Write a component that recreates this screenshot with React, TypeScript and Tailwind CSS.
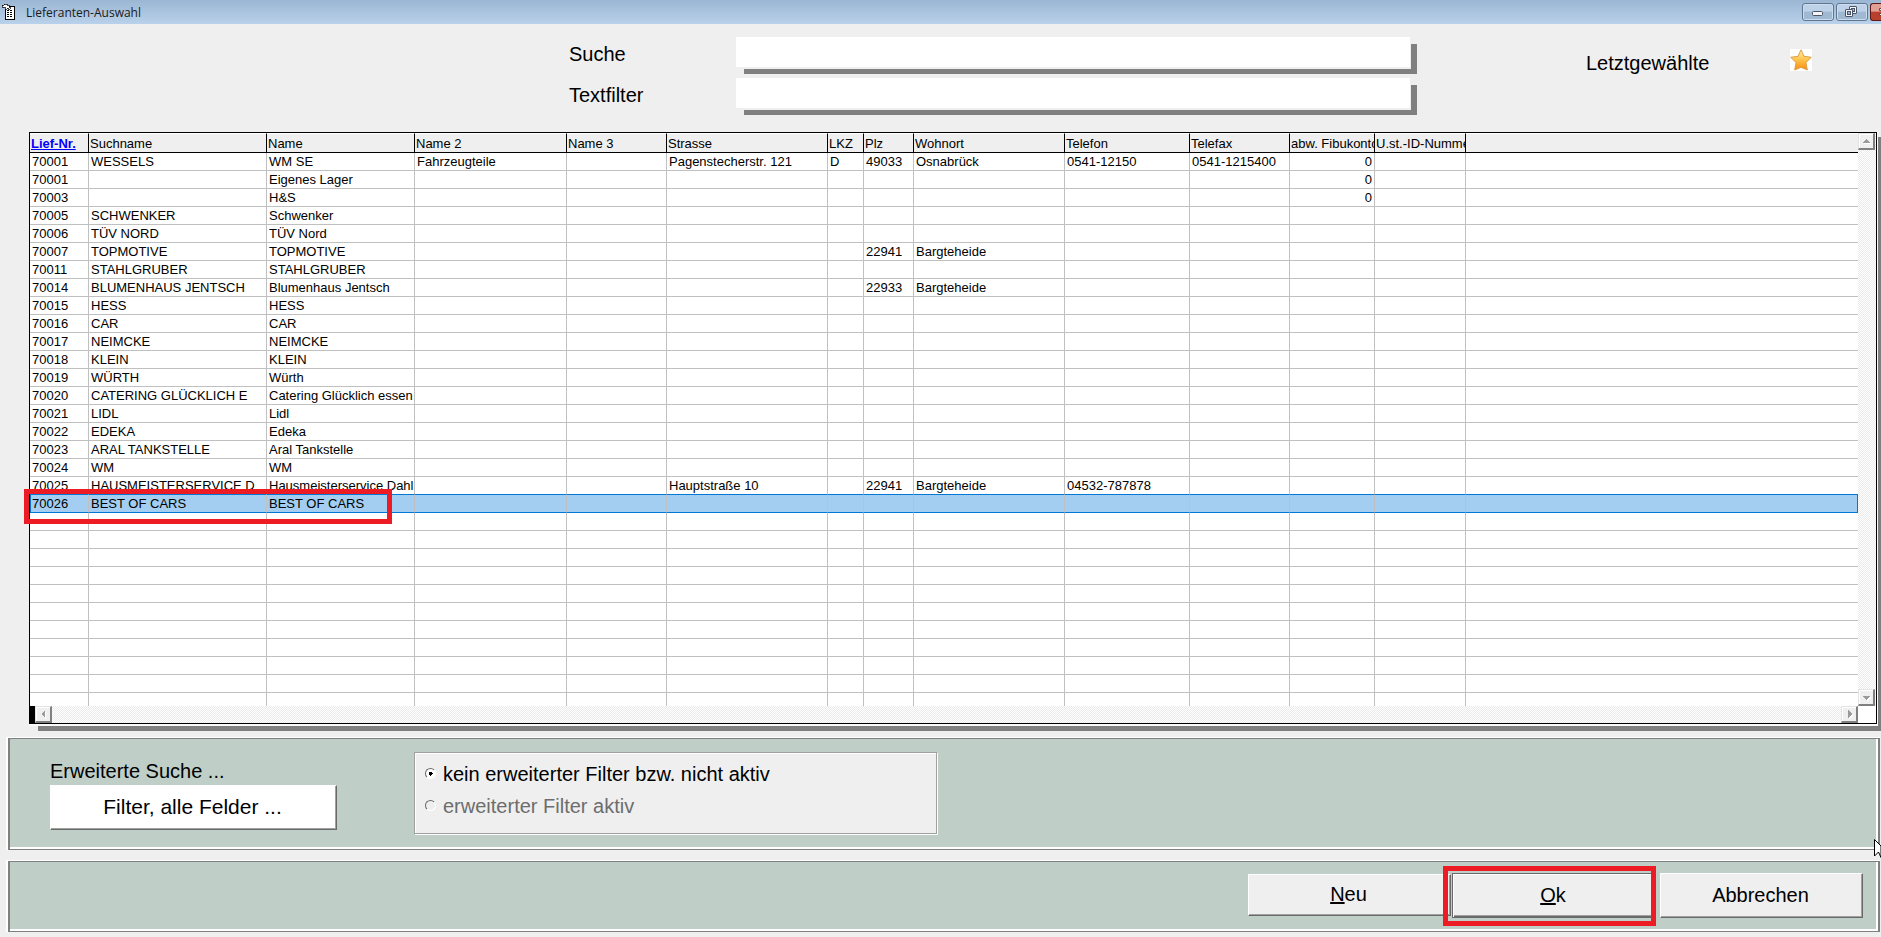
import { useState, type ReactNode } from "react";

interface Supplier {
  nr: string;
  search?: string;
  name: string;
  name2?: string;
  street?: string;
  country?: string;
  zip?: string;
  city?: string;
  phone?: string;
  fax?: string;
  account?: string;
}

const columns = [
  { label: "Lief-Nr.", width: "w-[59px]" },
  { label: "Suchname", width: "w-[178px]" },
  { label: "Name", width: "w-[148px]" },
  { label: "Name 2", width: "w-[152px]" },
  { label: "Name 3", width: "w-[100px]" },
  { label: "Strasse", width: "w-[161px]" },
  { label: "LKZ", width: "w-[36px]" },
  { label: "Plz", width: "w-[50px]" },
  { label: "Wohnort", width: "w-[151px]" },
  { label: "Telefon", width: "w-[125px]" },
  { label: "Telefax", width: "w-[100px]" },
  { label: "abw. Fibukonto", width: "w-[85px]" },
  { label: "U.st.-ID-Nummer", width: "w-[91px]" },
];

const suppliers: Supplier[] = [
  {
    nr: "70001",
    search: "WESSELS",
    name: "WM SE",
    name2: "Fahrzeugteile",
    street: "Pagenstecherstr. 121",
    country: "D",
    zip: "49033",
    city: "Osnabrück",
    phone: "0541-12150",
    fax: "0541-1215400",
    account: "0",
  },
  { nr: "70001", name: "Eigenes Lager", account: "0" },
  { nr: "70003", name: "H&S", account: "0" },
  { nr: "70005", search: "SCHWENKER", name: "Schwenker" },
  { nr: "70006", search: "TÜV NORD", name: "TÜV Nord" },
  { nr: "70007", search: "TOPMOTIVE", name: "TOPMOTIVE", zip: "22941", city: "Bargteheide" },
  { nr: "70011", search: "STAHLGRUBER", name: "STAHLGRUBER" },
  { nr: "70014", search: "BLUMENHAUS JENTSCH", name: "Blumenhaus Jentsch", zip: "22933", city: "Bargteheide" },
  { nr: "70015", search: "HESS", name: "HESS" },
  { nr: "70016", search: "CAR", name: "CAR" },
  { nr: "70017", search: "NEIMCKE", name: "NEIMCKE" },
  { nr: "70018", search: "KLEIN", name: "KLEIN" },
  { nr: "70019", search: "WÜRTH", name: "Würth" },
  { nr: "70020", search: "CATERING GLÜCKLICH E", name: "Catering Glücklich essen" },
  { nr: "70021", search: "LIDL", name: "Lidl" },
  { nr: "70022", search: "EDEKA", name: "Edeka" },
  { nr: "70023", search: "ARAL TANKSTELLE", name: "Aral Tankstelle" },
  { nr: "70024", search: "WM", name: "WM" },
  {
    nr: "70025",
    search: "HAUSMEISTERSERVICE D",
    name: "Hausmeisterservice Dahlmann",
    street: "Hauptstraße 10",
    zip: "22941",
    city: "Bargteheide",
    phone: "04532-787878",
  },
  { nr: "70026", search: "BEST OF CARS", name: "BEST OF CARS" },
];

const EMPTY_ROWS = 10;

function toCells(s: Supplier) {
  return [s.nr, s.search, s.name, s.name2, "", s.street, s.country, s.zip, s.city, s.phone, s.fax, s.account, ""];
}

function TitleBar() {
  return (
    <header className="flex h-6 items-center bg-linear-to-b from-[#9bb6d3] to-[#b9d1ea]">
      <svg className="ml-0.5 size-4 shrink-0" viewBox="0 0 16 16" shapeRendering="crispEdges" aria-hidden="true">
        <path d="M3.500 5V15.500H12.500V2.500H7" fill="#fff" stroke="#000" />
        <path d="M0 1H2V0H5V1H7V3H8V5H6V4H5V5H3V3H0Z" fill="#fff" stroke="#000" strokeWidth="0.7" />
        <path d="M5 6.500H11M5 8.500H11M5 10.500H11M5 12.500H11" stroke="#000" strokeDasharray="2 1" />
      </svg>
      <h1 className="mt-0.5 ml-2 font-['Open_Sans',sans-serif] text-[12px] leading-4 text-[#1a1a1a]">
        Lieferanten-Auswahl
      </h1>
      <div className="ml-auto flex gap-0.5 overflow-hidden">
        <CaptionButton label="Minimieren">
          <rect x="9.500" y="7.500" width="10" height="4" rx="1" fill="#f5f5f5" stroke="#4b5566" />
        </CaptionButton>
        <CaptionButton label="Wiederherstellen">
          <rect x="12.500" y="2.500" width="7" height="7" rx="0.5" fill="#f5f5f5" stroke="#4b5566" />
          <rect x="14.500" y="4.500" width="3" height="3" fill="#9db8d2" stroke="#4b5566" />
          <rect x="8.500" y="5.500" width="7" height="7" rx="0.5" fill="#f5f5f5" stroke="#4b5566" />
          <rect x="10.500" y="7.500" width="3" height="3" fill="#9db8d2" stroke="#4b5566" />
        </CaptionButton>
        <button
          type="button"
          aria-label="Schließen"
          className="h-[18px] w-[11px] rounded-l-[3px] border border-r-0 border-[#5a1a1a] bg-linear-to-b from-[#e2a095] from-45% to-[#b8402c] to-50%"
        >
          <svg className="h-4 w-[10px]" viewBox="0 0 10 16" aria-hidden="true">
            <path d="M10 4.500h-1.500v2h1.500M10 9.500h-1.500v2h1.500" fill="#fff" stroke="#6b4040" />
          </svg>
        </button>
      </div>
    </header>
  );
}

function CaptionButton({ label, children }: { label: string; children: ReactNode }) {
  return (
    <button
      type="button"
      aria-label={label}
      className="h-[18px] w-8 rounded-[3px] border border-[#5f7590] bg-linear-to-b from-[#bdd2e8] from-45% to-[#9fb9d3] to-50% shadow-[inset_0_0_0_1px_#ccddee]"
    >
      <svg className="h-4 w-[30px]" viewBox="0 0 30 16" aria-hidden="true">
        {children}
      </svg>
    </button>
  );
}

function SearchField({ id, label }: { id: string; label: string }) {
  return (
    <div className="flex h-8 items-center">
      <label htmlFor={id} className="w-[167px] shrink-0 pt-0.5 text-[20px] leading-6">
        {label}
      </label>
      <input
        id={id}
        type="text"
        className="h-8 min-w-0 flex-1 border-r border-b-2 border-[#efefef] bg-white px-2 text-[20px] shadow-[7px_6px_0_-1px_#808080] outline-none"
      />
    </div>
  );
}

function StarIcon() {
  return (
    <svg className="size-[22px]" viewBox="0 0 22 22" aria-hidden="true">
      <defs>
        <linearGradient id="star" x1="0" y1="0" x2="0" y2="1">
          <stop offset="0" stopColor="#fff0a8" />
          <stop offset="0.5" stopColor="#fdc24a" />
          <stop offset="1" stopColor="#fb8c10" />
        </linearGradient>
      </defs>
      <path
        d="M11 0.800L14 7.300L21.300 8.300L16 13.500L17.300 21L11 18.300L4.700 21L6 13.500L0.700 8.300L8 7.300Z"
        fill="url(#star)"
        stroke="#d9a04c"
        strokeLinejoin="round"
      />
    </svg>
  );
}

const arrows = {
  up: "M4 10H12L8 6Z",
  down: "M4 7H12L8 11Z",
  left: "M10 4V12L6 8Z",
  right: "M7 4V12L11 8Z",
};

function ScrollButton({ dir, label }: { dir: keyof typeof arrows; label: string }) {
  return (
    <button
      type="button"
      aria-label={label}
      className="size-[17px] shrink-0 border-t border-l border-r-2 border-b-2 border-t-[#e3e3e3] border-r-[#808080] border-b-[#808080] border-l-[#e3e3e3] bg-[#efefef] shadow-[inset_1px_1px_0_#fff]"
    >
      <svg className="size-[14px]" viewBox="1 1 14 14" shapeRendering="crispEdges" aria-hidden="true">
        <path d={arrows[dir]} fill="#fff" transform="translate(1 1)" />
        <path d={arrows[dir]} fill="#9a9a9a" />
      </svg>
    </button>
  );
}

function SupplierTable() {
  const [selected, setSelected] = useState(19);

  return (
    <table className="w-full table-fixed border-separate border-spacing-0 text-[13px] leading-[17px]">
      <colgroup>
        {columns.map((c) => (
          <col key={c.label} className={c.width} />
        ))}
        <col />
      </colgroup>
      <thead>
        <tr className="h-5">
          {columns.map((c, i) => (
            <th
              key={c.label}
              scope="col"
              className="border-t border-r border-b border-t-white border-r-black border-b-black bg-[#efefef] p-0 text-left font-normal"
            >
              <div className="overflow-hidden pl-px whitespace-nowrap">
                {i === 0 ? (
                  <a href="#" className="font-bold text-[#0000ff] underline">
                    {c.label}
                  </a>
                ) : (
                  c.label
                )}
              </div>
            </th>
          ))}
          <td className="border-t border-b border-t-white border-b-black bg-[#efefef] p-0" />
        </tr>
      </thead>
      <tbody>
        {suppliers.map((s, row) => {
          const active = row === selected;
          // the row above draws the upper edge of the selection
          const line = active || row === selected - 1 ? "border-b-[#0078d7]" : "border-b-[#c0c0c0]";
          return (
            <tr
              key={row}
              onClick={() => setSelected(row)}
              aria-selected={active}
              className={active ? "relative h-[18px] bg-[#a3cef1]" : "h-[18px]"}
            >
              {toCells(s).map((value, i) => (
                <td key={i} className={`h-[18px] border-r border-b border-r-[#c0c0c0] p-0 ${line}`}>
                  <div
                    className={`h-[17px] overflow-hidden whitespace-nowrap ${i === 11 ? "pr-0.5 text-right" : ""} ${
                      active && i === 0 ? "border-l border-[#0078d7] pl-px" : "pl-0.5"
                    }`}
                  >
                    {value}
                  </div>
                  {active && i === 0 && (
                    <span className="pointer-events-none absolute -top-[6px] -left-1.5 h-[35px] w-[368px] border-[5px] border-[#ed1c24]" />
                  )}
                </td>
              ))}
              <td className={`border-b p-0 ${line} ${active ? "border-r border-r-[#0078d7]" : ""}`} />
            </tr>
          );
        })}
        {Array.from({ length: EMPTY_ROWS }, (_, row) => (
          <tr key={row} className="h-[18px]">
            {columns.map((c) => (
              <td key={c.label} className="border-r border-b border-[#c0c0c0] p-0" />
            ))}
            <td className="border-b border-[#c0c0c0] p-0" />
          </tr>
        ))}
        <tr className="h-[13px]">
          {columns.map((c) => (
            <td key={c.label} className="border-r border-[#c0c0c0] p-0" />
          ))}
          <td className="p-0" />
        </tr>
      </tbody>
    </table>
  );
}

function Panel({ className, children }: { className: string; children: ReactNode }) {
  return (
    <section className="mr-px ml-1.5 border-t border-l-2 border-white">
      <div className="border-t border-r-2 border-b border-l-2 border-[#808080]">
        <div className={`border-r-2 border-b-2 border-white bg-[#bfcfc8] ${className}`}>{children}</div>
      </div>
    </section>
  );
}

interface FilterOptionProps {
  value: string;
  label: string;
  current: string;
  onPick: (value: string) => void;
  disabled?: boolean;
}

function FilterOption({ value, label, current, onPick, disabled }: FilterOptionProps) {
  return (
    <label className={`flex items-center gap-[7px] ${disabled ? "text-[#6d6d6d]" : ""}`}>
      <input
        type="radio"
        name="filter"
        value={value}
        checked={current === value}
        disabled={disabled}
        onChange={() => onPick(value)}
        className="mb-0.5 size-[11px] appearance-none rounded-full border border-t-[#696969] border-r-white border-b-white border-l-[#696969] bg-[#efefef] checked:bg-white checked:bg-[radial-gradient(circle,#000_2px,transparent_2px)]"
      />
      {label}
    </label>
  );
}

const raised =
  "border border-t-white border-l-white border-r-[#696969] border-b-[#696969] shadow-[inset_-1px_-1px_0_#a0a0a0]";

export default function App() {
  const [filter, setFilter] = useState("off");

  return (
    <main className="relative min-h-[937px] overflow-hidden bg-[#efefef] font-['Liberation_Sans',Arial,sans-serif] text-black">
      <TitleBar />

      <div className="flex pt-[13px] pl-[569px]">
        <div className="flex flex-1 flex-col gap-[9px]">
          <SearchField id="suche" label="Suche" />
          <SearchField id="textfilter" label="Textfilter" />
        </div>
        <div className="flex w-[470px] shrink-0 items-start justify-between pt-3 pr-[69px] pl-[175px]">
          <span className="mt-0.5 text-[20px] leading-6">Letztgewählte</span>
          <button type="button" aria-label="Letztgewählte anzeigen" className="size-[22px] bg-white">
            <StarIcon />
          </button>
        </div>
      </div>

      <div className="mt-[22px] mr-[3px] ml-[29px] border-r border-b-2 border-[#fafafa] shadow-[9px_5px_0_#808080]">
        <div className="border border-black bg-white">
          <div className="flex">
            <div className="min-w-0 flex-1">
              <SupplierTable />
            </div>
            <div className="flex w-[18px] flex-col justify-between bg-[repeating-conic-gradient(#ffffff_0_25%,#ebebeb_0_50%)] bg-[length:2px_2px]">
              <ScrollButton dir="up" label="Nach oben" />
              <ScrollButton dir="down" label="Nach unten" />
            </div>
          </div>
          <div className="flex">
            <div className="w-[5px] bg-black" />
            <div className="flex flex-1 justify-between bg-[repeating-conic-gradient(#ffffff_0_25%,#ebebeb_0_50%)] bg-[length:2px_2px]">
              <ScrollButton dir="left" label="Nach links" />
              <ScrollButton dir="right" label="Nach rechts" />
            </div>
            <div className="w-[18px] bg-white" />
          </div>
        </div>
      </div>

      <div className="mt-[11px] flex flex-col gap-[10px]">
        <Panel className="flex h-[110px] items-start pl-10">
          <div className="flex w-[287px] flex-col pt-5">
            <span className="mb-0.5 text-[20px] leading-6">Erweiterte Suche ...</span>
            <button type="button" className={`h-[45px] bg-white pr-0.5 pb-0.5 text-[21px] leading-6 ${raised}`}>
              Filter, alle Felder ...
            </button>
          </div>
          <fieldset className="mt-[13px] ml-[77px] flex h-[82px] w-[523px] flex-col gap-2 border border-[#a0a0a0] bg-[#efefef] pt-[9px] pl-2.5 text-[20px] leading-6 shadow-[inset_1px_1px_0_#fff,1px_1px_0_#fff]">
            <FilterOption value="off" label="kein erweiterter Filter bzw. nicht aktiv" current={filter} onPick={setFilter} />
            <FilterOption value="on" label="erweiterter Filter aktiv" current={filter} onPick={setFilter} disabled />
          </fieldset>
        </Panel>

        <Panel className="flex h-[69px] items-start justify-end pt-[11px] pr-[13px] text-[20px] leading-6">
          <button type="button" className={`mt-px h-[42px] w-[203px] bg-[#efefef] pr-0.5 pb-0.5 ${raised}`}>
            <u>N</u>eu
          </button>
          <div className="relative ml-px">
            <button
              type="button"
              className="h-[45px] w-[204px] border border-[#696969] bg-[#efefef] pr-0.5 pb-0.5 shadow-[inset_1px_1px_0_#fff,inset_-1px_-1px_0_#696969,inset_-2px_-2px_0_#a0a0a0]"
            >
              <u>O</u>k
            </button>
            <span className="pointer-events-none absolute -top-[7px] -left-[9px] h-[60px] w-[213px] border-[5px] border-[#ed1c24]" />
          </div>
          <button type="button" className={`ml-1 h-[45px] w-[203px] bg-[#efefef] pr-0.5 pb-0.5 ${raised}`}>
            Abbrechen
          </button>
        </Panel>
      </div>

      {/* mouse pointer, cut off by the window edge */}
      <svg className="pointer-events-none absolute top-[839px] right-0 h-[19px] w-[7px]" viewBox="0 0 7 19" aria-hidden="true">
        <path d="M0.500 0.500V17L4.500 13L7 18.500V7Z" fill="#fff" stroke="#000" />
      </svg>
    </main>
  );
}
